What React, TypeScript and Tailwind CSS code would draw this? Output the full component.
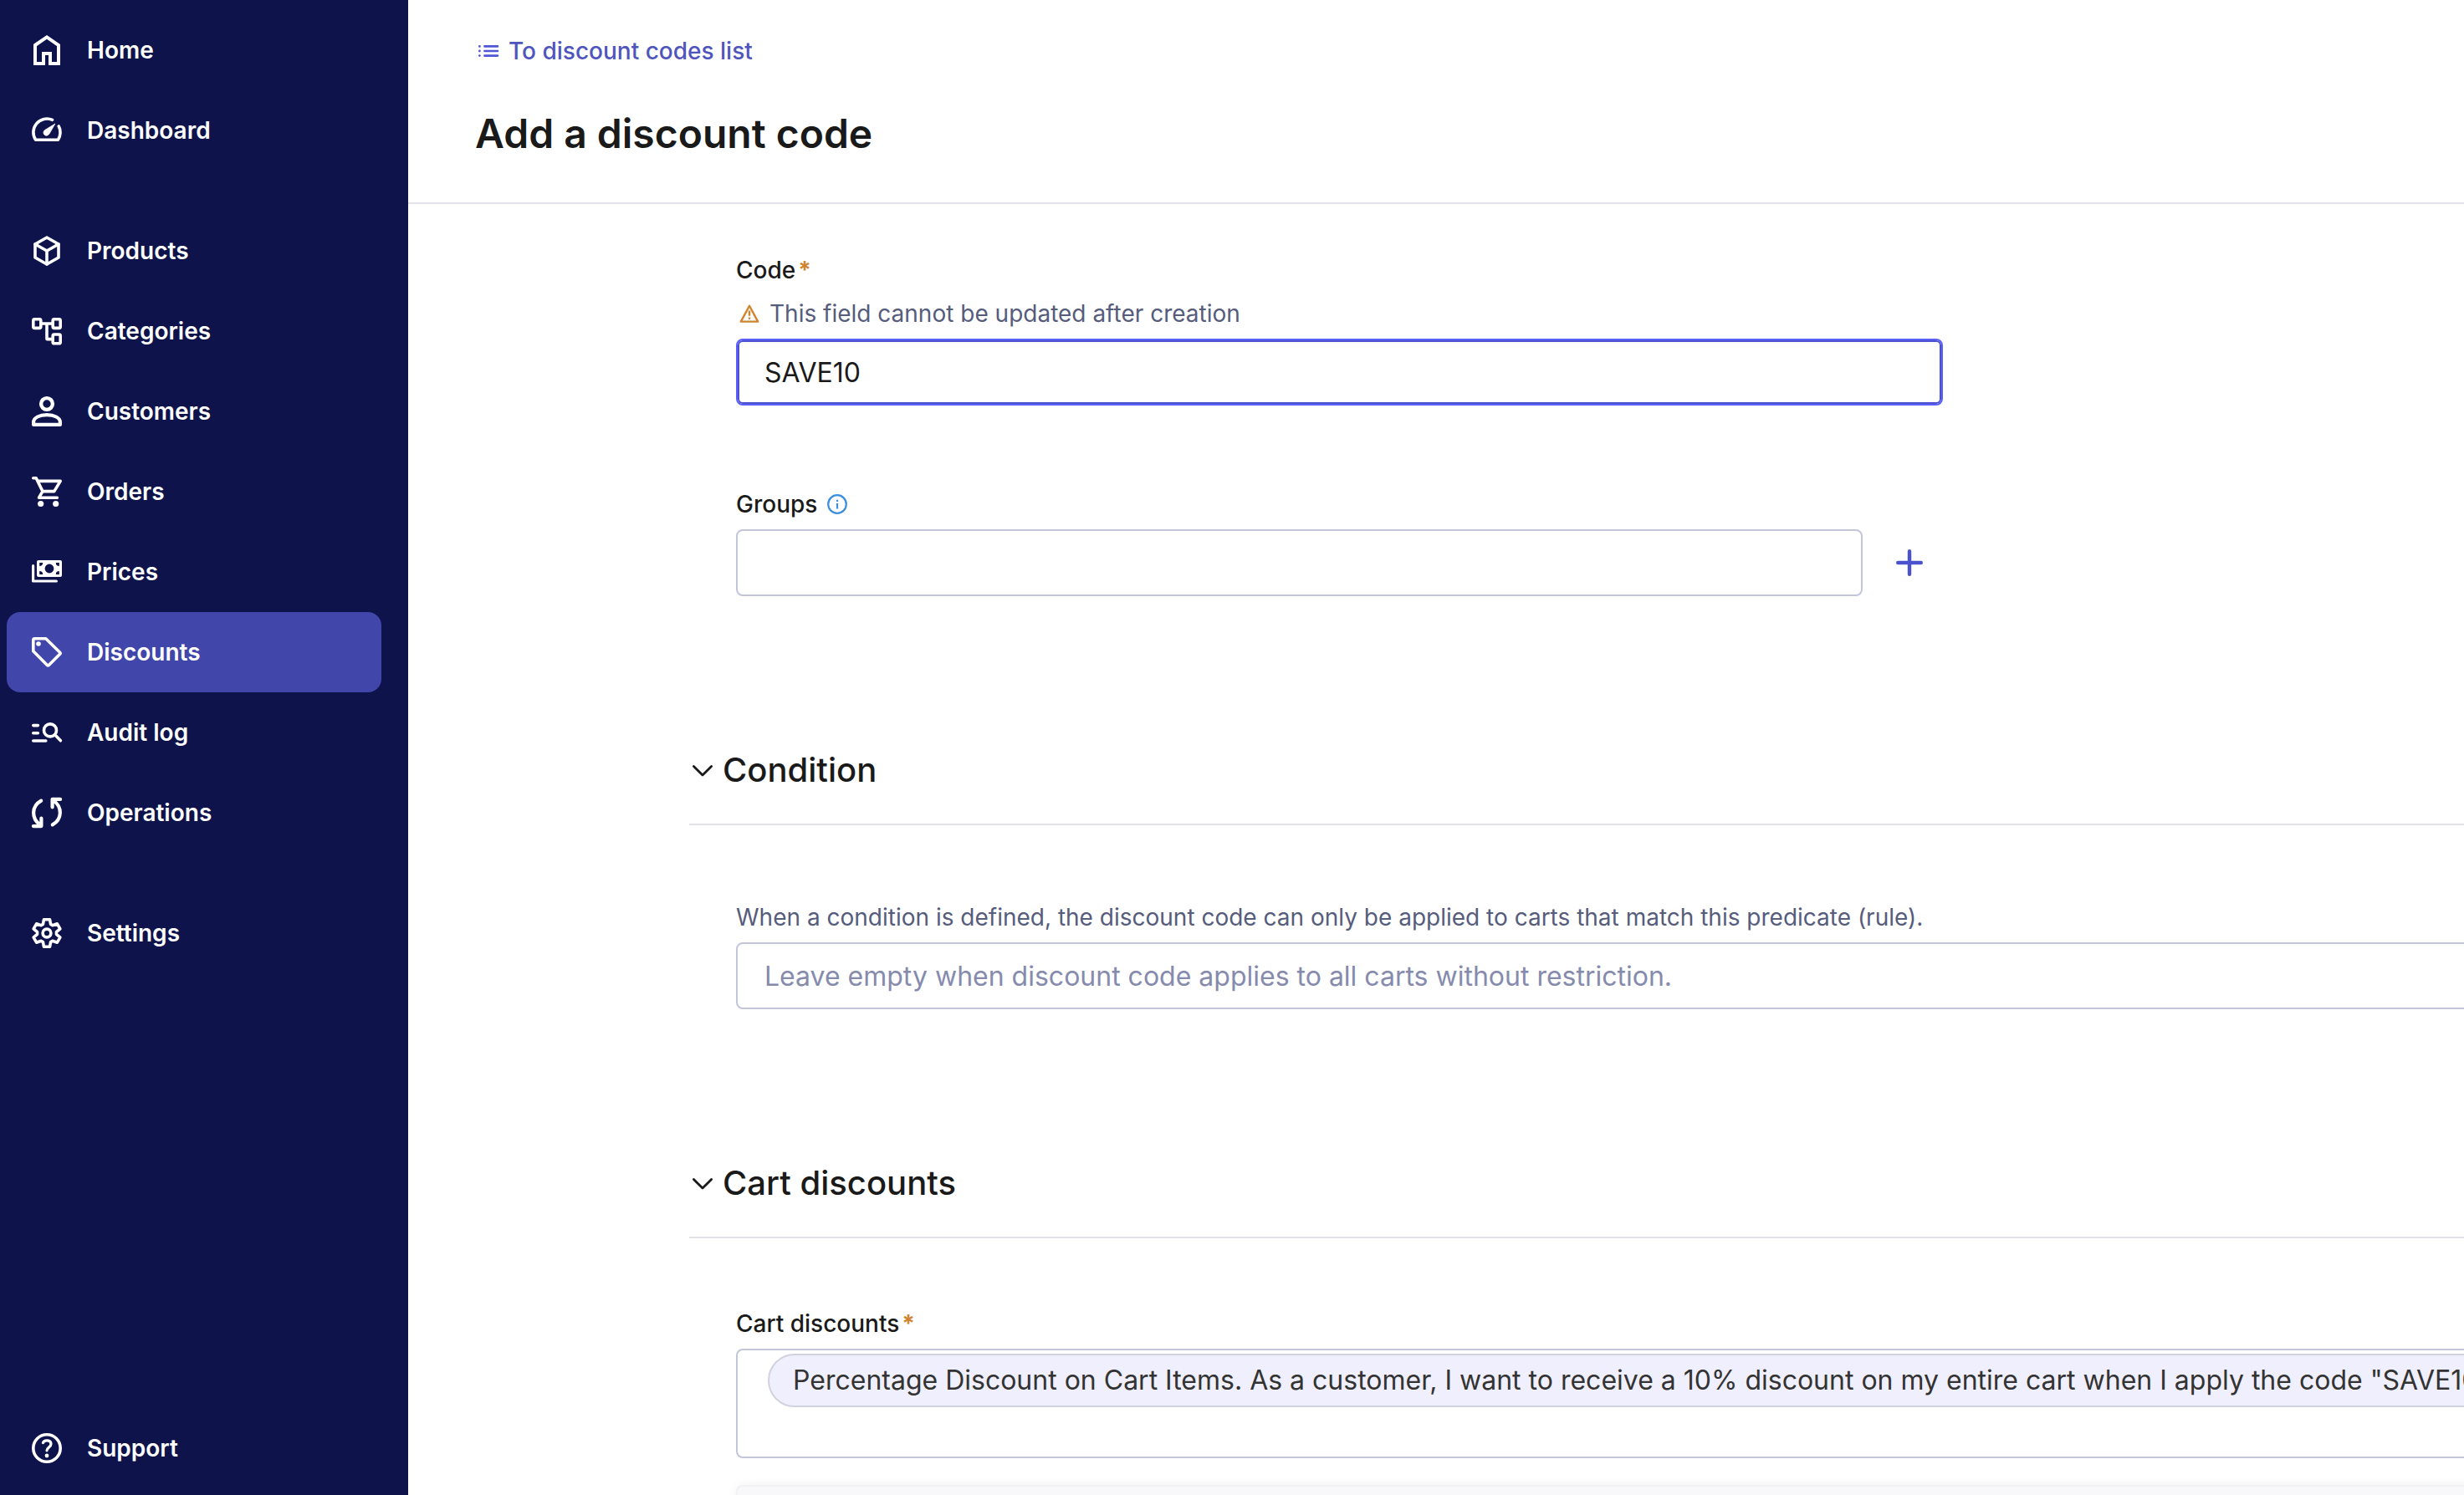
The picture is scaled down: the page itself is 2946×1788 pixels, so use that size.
import React from "react";

type IconProps = { children: React.ReactNode };

/* 40px navigation icon, drawn with a rounded 3.6px stroke */
function NavIcon({ children }: IconProps) {
  return (
    <svg
      viewBox="0 0 40 40"
      className="size-10 shrink-0"
      fill="none"
      stroke="currentColor"
      strokeWidth="3.6"
      strokeLinecap="round"
      strokeLinejoin="round"
      aria-hidden="true"
    >
      {children}
    </svg>
  );
}

function gearPoints() {
  const tooth = [
    [-4.6, 10.6],
    [-3.5, 16.3],
    [3.5, 16.3],
    [4.6, 10.6],
  ];
  const points: string[] = [];
  for (let i = 0; i < 6; i++) {
    const a = (i * Math.PI) / 3;
    for (const [x, y] of tooth) {
      const px = 20 + x * Math.cos(a) + y * Math.sin(a);
      const py = 20 + x * Math.sin(a) - y * Math.cos(a);
      points.push(`${px.toFixed(2)},${py.toFixed(2)}`);
    }
  }
  return points.join(" ");
}

const icons = {
  home: (
    <NavIcon>
      <path
        d="M6 14 20 4.4 34 14V36H24V24H16V36H6Z"
        strokeWidth="4"
        strokeLinejoin="miter"
      />
    </NavIcon>
  ),
  dashboard: (
    <NavIcon>
      <path d="M26.6 7.4A16.2 16.2 0 0 0 6.6 31.2H33.4C36.6 26.5 37 19.5 34.2 15" />
      <path
        d="M29.6 12.2 17.6 19.6A3.6 3.6 0 1 0 22.6 24.6Z"
        fill="currentColor"
        strokeWidth="0.8"
      />
    </NavIcon>
  ),
  products: (
    <NavIcon>
      <path d="M20 4 34 12V28L20 36 6 28V12Z" />
      <path d="M6 12 20 20 34 12M20 20V36" />
    </NavIcon>
  ),
  categories: (
    <NavIcon>
      <rect x="3.8" y="5.8" width="9" height="10.6" rx="1.6" />
      <rect x="27.2" y="5.8" width="9" height="10.6" rx="1.6" />
      <rect x="27.2" y="24" width="9" height="10.8" rx="1.6" />
      <path d="M13 11H27M20 11V29.6H27" />
    </NavIcon>
  ),
  customers: (
    <NavIcon>
      <circle cx="20" cy="11" r="6.9" strokeWidth="4.4" />
      <path
        d="M4.1 35.9V33C4.1 27.4 11.5 24.2 20 24.2S35.9 27.4 35.9 33V35.9Z"
        strokeWidth="4.2"
      />
    </NavIcon>
  ),
  orders: (
    <NavIcon>
      <path d="M3.8 3.8H7.2L15 19.6H28.8L36.2 7.4H9.4M15 19.6 10.6 27.2H32.4" />
      <circle cx="12.7" cy="34.5" r="3.6" fill="currentColor" stroke="none" />
      <circle cx="30.7" cy="34.5" r="3.6" fill="currentColor" stroke="none" />
    </NavIcon>
  ),
  prices: (
    <NavIcon>
      <path
        fill="currentColor"
        stroke="none"
        fillRule="evenodd"
        d="M10 6H36A2 2 0 0 1 38 8V24A2 2 0 0 1 36 26H10A2 2 0 0 1 8 24V8A2 2 0 0 1 10 6ZM11.2 9V13A4 4 0 0 0 15.2 9ZM34.8 9V13A4 4 0 0 1 30.8 9ZM11.2 23V19A4 4 0 0 1 15.2 23ZM34.8 23V19A4 4 0 0 0 30.8 23ZM23 10.6A5.4 5.4 0 1 0 23 21.4A5.4 5.4 0 1 0 23 10.6Z"
      />
      <path d="M3.6 12.6V31H31.4" strokeWidth="3.2" />
    </NavIcon>
  ),
  discounts: (
    <NavIcon>
      <path d="M3.8 5.4Q3.8 3.8 5.4 3.8H18.8L35.6 20.2Q36.6 21.2 35.6 22.2L22.4 35.4Q21.4 36.4 20.4 35.4L3.8 18.8Z" />
      <circle cx="10" cy="10" r="2.8" fill="currentColor" stroke="none" />
    </NavIcon>
  ),
  audit: (
    <NavIcon>
      <path d="M3.8 11.6H9.4M3.8 20.8H9.4M3.8 30H18.8M29.6 22.8 36.4 29.8" />
      <circle cx="24" cy="17.4" r="7.5" />
    </NavIcon>
  ),
  operations: (
    <NavIcon>
      <path d="M13.2 5.6C1.8 12 .8 26.6 12.2 34.6M3.9 36.1H13.4V26.6" strokeWidth="4.2" />
      <path d="M26.8 34.4C38.2 28 39.2 13.4 27.8 5.4M36.1 3.9H26.6V13.4" strokeWidth="4.2" />
    </NavIcon>
  ),
  settings: (
    <NavIcon>
      <polygon points={gearPoints()} />
      <circle cx="20" cy="20" r="4.9" />
    </NavIcon>
  ),
  support: (
    <NavIcon>
      <circle cx="20" cy="20" r="16.2" />
      <path d="M15.4 13.6C17 9.6 25 10 25 15C25 18.6 20 19.4 20 22.8" strokeWidth="3.2" />
      <circle cx="20" cy="29" r="2.4" fill="currentColor" stroke="none" />
    </NavIcon>
  ),
};

type IconName = keyof typeof icons;

const navGroups: { label: string; icon: IconName; active?: boolean }[][] = [
  [
    { label: "Home", icon: "home" },
    { label: "Dashboard", icon: "dashboard" },
  ],
  [
    { label: "Products", icon: "products" },
    { label: "Categories", icon: "categories" },
    { label: "Customers", icon: "customers" },
    { label: "Orders", icon: "orders" },
    { label: "Prices", icon: "prices" },
    { label: "Discounts", icon: "discounts", active: true },
    { label: "Audit log", icon: "audit" },
    { label: "Operations", icon: "operations" },
  ],
  [{ label: "Settings", icon: "settings" }],
];

function NavLink({ label, icon, active }: { label: string; icon: IconName; active?: boolean }) {
  return (
    <a
      href="#"
      aria-current={active ? "page" : undefined}
      className={
        active
          ? "flex h-24 items-center gap-7 rounded-2xl bg-[#4146aa] px-7"
          : "flex h-24 items-center gap-7 rounded-2xl px-7"
      }
    >
      {icons[icon]}
      <span>{label}</span>
    </a>
  );
}

function Sidebar() {
  return (
    <aside className="flex w-[488px] shrink-0 flex-col bg-[#0e134b] pt-3 pr-8 pb-2 pl-2 text-[28px] leading-10 font-semibold text-white">
      <nav className="flex flex-col gap-12">
        {navGroups.map((group, i) => (
          <ul key={i}>
            {group.map((item) => (
              <li key={item.label}>
                <NavLink {...item} />
              </li>
            ))}
          </ul>
        ))}
      </nav>
      <div className="mt-auto">
        <NavLink label="Support" icon="support" />
      </div>
    </aside>
  );
}

function Required() {
  return <span className="ml-[3px] font-bold text-[#d0842e]">*</span>;
}

function SectionHeading({ children }: { children: React.ReactNode }) {
  return (
    <h2 className="border-b-2 border-[#e2e2eb] pb-10 text-[40px] leading-12 font-medium">
      <button type="button" aria-expanded="true" className="flex items-center gap-2">
        <svg
          viewBox="0 0 32 32"
          className="size-8"
          fill="none"
          stroke="currentColor"
          strokeWidth="2.8"
          strokeLinecap="round"
          strokeLinejoin="round"
          aria-hidden="true"
        >
          <path d="M5.4 11.4 16 22 26.6 11.4" />
        </svg>
        {children}
      </button>
    </h2>
  );
}

export default function App() {
  return (
    <div className="flex h-screen overflow-hidden bg-white font-['Inter',sans-serif] text-[#1a1a1a]">
      <Sidebar />
      <main className="min-w-0 flex-1 overflow-hidden">
        <header className="border-b-2 border-[#e2e2eb] pt-[41px] pb-[54px] pl-20">
          <a
            href="#"
            className="inline-flex items-center gap-2 align-top text-[28px] leading-10 font-medium text-[#4f55bd]"
          >
            <svg
              viewBox="0 0 32 32"
              className="size-8"
              fill="none"
              stroke="#4f57d6"
              strokeWidth="2.6"
              strokeLinecap="round"
              aria-hidden="true"
            >
              <path d="M11.4 10.4H27M11.4 16H27M11.4 21.6H27" />
              <path d="M5.4 10.4V10.4M5.4 16V16M5.4 21.6V21.6" strokeWidth="2.8" />
            </svg>
            To discount codes list
          </a>
          <h1 className="mt-[51px] text-[48px] leading-14 font-semibold">Add a discount code</h1>
        </header>

        <form className="pl-[336px] text-[28px] leading-10">
          <div className="w-[1499px] max-w-full pt-[59px] pl-14">
            <label htmlFor="code" className="block font-medium">
              Code
              <Required />
            </label>
            <p id="code-hint" className="mt-3 flex items-center gap-2 text-[#565c7c]">
              <svg
                viewBox="0 0 32 32"
                className="size-8"
                fill="none"
                stroke="#d0842e"
                strokeWidth="2.4"
                aria-hidden="true"
              >
                <path d="M5.8 25.6 16 6.8 26.2 25.6Z" strokeLinejoin="round" />
                <path d="M16 12.6V18.8M16 20.4V22.8" />
              </svg>
              This field cannot be updated after creation
            </p>
            <input
              id="code"
              type="text"
              defaultValue="SAVE10"
              aria-describedby="code-hint"
              className="mt-[10px] block h-20 w-full rounded-lg border-2 border-[#5b60fb] px-8 text-[32px] shadow-[inset_0_0_0_2px_#4b52cf] outline-none"
            />

            <div className="mt-[98px] flex items-center gap-3">
              <label htmlFor="groups" className="font-medium">
                Groups
              </label>
              <button type="button" aria-label="About groups">
                <svg
                  viewBox="0 0 24 24"
                  className="size-6"
                  fill="none"
                  stroke="#3b8fdd"
                  strokeWidth="2.2"
                  aria-hidden="true"
                >
                  <circle cx="12" cy="12" r="10.8" />
                  <path d="M12 11V17.4M12 6.8V9" />
                </svg>
              </button>
            </div>
            <div className="mt-[10px] flex items-center">
              <input
                id="groups"
                type="text"
                className="h-20 min-w-0 flex-1 rounded-lg border-2 border-[#c3c5d9] px-8 text-[32px] outline-none"
              />
              <button
                type="button"
                aria-label="Add group"
                className="mr-2 ml-6 flex size-16 items-center justify-center"
              >
                <svg
                  viewBox="0 0 32 32"
                  className="size-8"
                  fill="none"
                  stroke="#4a53cd"
                  strokeWidth="4.4"
                  strokeLinecap="round"
                  aria-hidden="true"
                >
                  <path d="M2.2 16H29.8M16 2.2V29.8" />
                </svg>
              </button>
            </div>
          </div>

          <section className="mt-[184px]">
            <SectionHeading>Condition</SectionHeading>
            <div className="-mr-16 pt-[90px] pl-14">
              <label htmlFor="condition" className="block text-[#565c7c]">
                When a condition is defined, the discount code can only be applied to carts that
                match this predicate (rule).
              </label>
              <input
                id="condition"
                type="text"
                placeholder="Leave empty when discount code applies to all carts without restriction."
                className="mt-[10px] block h-20 w-full rounded-lg border-2 border-[#c3c5d9] px-8 text-[32px] outline-none placeholder:text-[#868bad]"
              />
            </div>
          </section>

          <section className="mt-[184px]">
            <SectionHeading>Cart discounts</SectionHeading>
            <div className="-mr-16 pt-[82px] pl-14">
              <p id="cart-discounts" className="font-medium">
                Cart discounts
                <Required />
              </p>
              <div
                role="group"
                aria-labelledby="cart-discounts"
                className="mt-[10px] h-[131px] rounded-lg border-2 border-[#c3c5d9] pt-1 pl-9"
              >
                <div className="flex h-16 items-center overflow-hidden rounded-l-full border-2 border-[#d1d1e0] bg-[#f0effd] pl-7 text-[32px] whitespace-nowrap text-[#333333]">
                  Percentage Discount on Cart Items. As a customer, I want to receive a 10% discount
                  on my entire cart when I apply the code "SAVE10"
                </div>
              </div>
              <div className="mt-8 h-40 rounded-lg border-2 border-[#f1f1f6] bg-[#f8f8fb] shadow-[0_0_12px_rgba(0,0,0,0.06)]" />
            </div>
          </section>
        </form>
      </main>
    </div>
  );
}
